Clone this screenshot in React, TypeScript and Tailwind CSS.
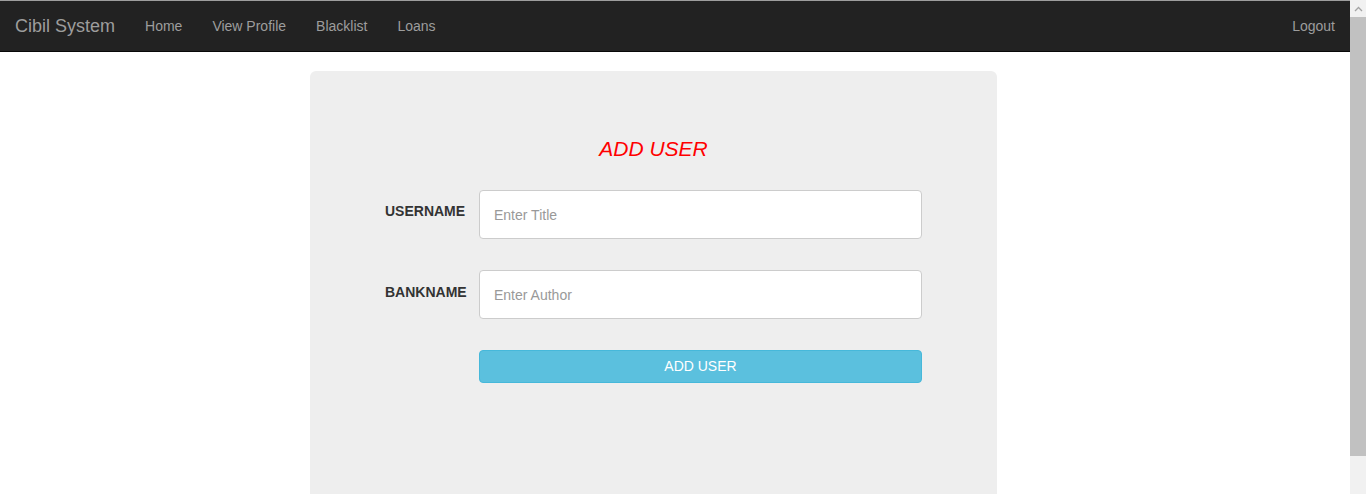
import React from "react";

export default function App() {
  return (
    <div
      className="flex h-[494px] w-[1366px] overflow-hidden bg-white text-[14px] text-[#333]"
      style={{ fontFamily: '"Liberation Sans", Arial, sans-serif' }}
    >
      <div className="flex min-w-0 flex-1 flex-col">
        <nav className="flex h-[52px] shrink-0 items-stretch border-t border-b border-t-[#9e9e9e] border-b-[#080808] bg-[#222]">
          <span className="flex items-center px-[15px] text-[18px] text-[#9d9d9d]">Cibil System</span>
          <a className="flex items-center px-[15px] text-[#9d9d9d]">Home</a>
          <a className="flex items-center px-[15px] text-[#9d9d9d]">View Profile</a>
          <a className="flex items-center px-[15px] text-[#9d9d9d]">Blacklist</a>
          <a className="flex items-center px-[15px] text-[#9d9d9d]">Loans</a>
          <div className="flex-1" />
          <a className="flex items-center px-[15px] text-[#9d9d9d]">Logout</a>
        </nav>
        <div className="pt-[19px] pl-[310px]">
          <div className="h-[460px] w-[687px] rounded-[6px] bg-[#eee] pt-[65px]">
            <h2 className="text-center text-[21px] italic leading-[26px] text-[#ff0000]">ADD USER</h2>
            <div className="mt-[28px] flex flex-col gap-[31px] pl-[75px]">
              <div className="flex items-start">
                <label className="w-[94px] pt-[13px] text-[14px] font-bold leading-[16px] text-[#333]">USERNAME</label>
                <input
                  className="h-[49px] w-[443px] rounded-[4px] border border-[#ccc] bg-white px-[14px] text-[14px] text-[#555] placeholder:text-[#999] outline-none"
                  placeholder="Enter Title"
                />
              </div>
              <div className="flex items-start">
                <label className="w-[94px] pt-[14px] text-[14px] font-bold leading-[16px] text-[#333]">BANKNAME</label>
                <input
                  className="h-[49px] w-[443px] rounded-[4px] border border-[#ccc] bg-white px-[14px] text-[14px] text-[#555] placeholder:text-[#999] outline-none"
                  placeholder="Enter Author"
                />
              </div>
            </div>
            <div className="mt-[31px] pl-[169px]">
              <button className="h-[33px] w-[443px] rounded-[4px] border border-[#46b8da] bg-[#5bc0de] text-[14px] text-white">
                ADD USER
              </button>
            </div>
          </div>
        </div>
      </div>
      <div className="flex w-[16px] shrink-0 flex-col bg-[#f1f1f1]">
        <div className="flex h-[17px] items-center justify-center">
          <svg width="9" height="6" viewBox="0 0 9 6">
            <path d="M1 5 L4.5 1.5 L8 5" fill="none" stroke="#a3a3a3" strokeWidth="1.3" />
          </svg>
        </div>
        <div className="h-[439px] bg-[#c1c1c1]" />
        <div className="flex-1" />
      </div>
    </div>
  );
}
